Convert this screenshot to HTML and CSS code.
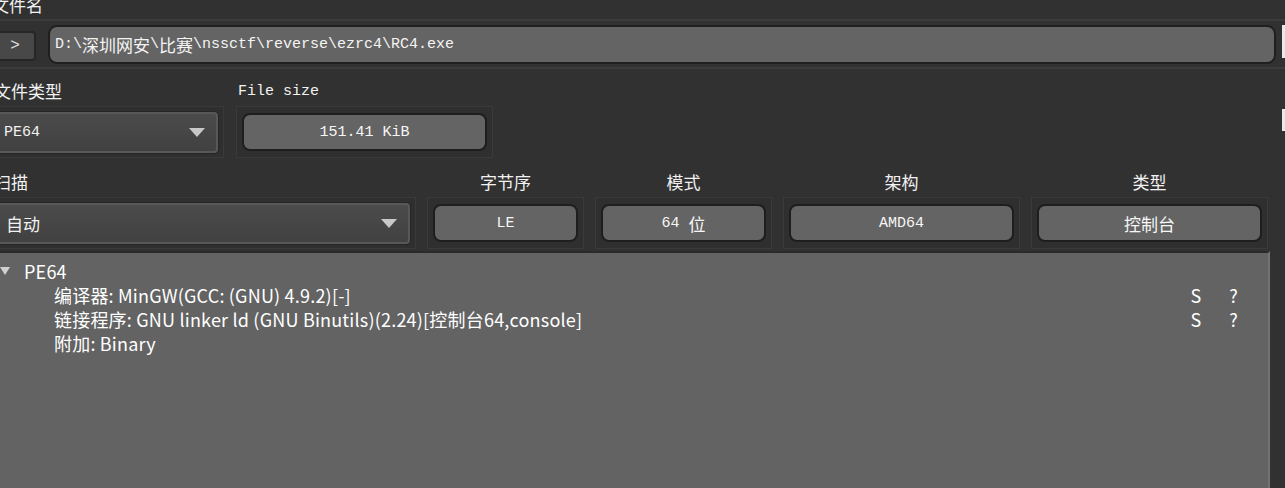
FILE: index.html
```html
<!DOCTYPE html>
<html lang="zh-CN">
<head>
  <meta charset="UTF-8">
  <title>Detect It Easy</title>
  <link rel="stylesheet" href="styles.css">
</head>
<body>
  <div class="window">
    <div class="caption">文件名</div>

    <div class="path-row">
      <button class="nav-btn">&gt;</button>
      <div class="path-field">D:\<span class="cjk">深圳网安</span>\<span class="cjk">比赛</span>\nssctf\reverse\ezrc4\RC4.exe</div>
      <div class="edge-bit"></div>
    </div>

    <div class="section info-grid">
      <div class="field">
        <div class="label">文件类型</div>
        <div class="frame">
          <div class="combo mono">PE64<span class="arrow"></span></div>
        </div>
      </div>
      <div class="field">
        <div class="label mono">File size</div>
        <div class="frame">
          <div class="value mono">151.41 KiB</div>
        </div>
      </div>
      <div class="edge-bit lower"></div>
    </div>

    <div class="section scan-grid">
      <div class="field">
        <div class="label">扫描</div>
        <div class="frame">
          <div class="combo combo-scan">自动<span class="arrow"></span></div>
        </div>
      </div>
      <div class="field">
        <div class="label centered">字节序</div>
        <div class="frame"><div class="value mono">LE</div></div>
      </div>
      <div class="field">
        <div class="label centered">模式</div>
        <div class="frame"><div class="value mono">64 <span class="cjk">位</span></div></div>
      </div>
      <div class="field">
        <div class="label centered">架构</div>
        <div class="frame"><div class="value mono">AMD64</div></div>
      </div>
      <div class="field">
        <div class="label centered">类型</div>
        <div class="frame"><div class="value mono"><span class="cjk">控制台</span></div></div>
      </div>
    </div>

    <div class="results">
      <div class="tree-row root">
        <span class="expander"></span>
        <span class="name">PE64</span>
      </div>
      <div class="tree-row child">
        <span class="name">编译器: MinGW(GCC: (GNU) 4.9.2)[-]</span>
        <span class="flag">S</span>
        <span class="flag">?</span>
      </div>
      <div class="tree-row child">
        <span class="name">链接程序: GNU linker ld (GNU Binutils)(2.24)[控制台64,console]</span>
        <span class="flag">S</span>
        <span class="flag">?</span>
      </div>
      <div class="tree-row child">
        <span class="name">附加: Binary</span>
      </div>
    </div>
  </div>
</body>
</html>
```

FILE: styles.css
```css
html, body {
  margin: 0;
  height: 100%;
}
body {
  background-color: #313131;
  color: #f2f2f2;
  font-family: "Noto Sans CJK SC", sans-serif;
  font-size: 17px;
  overflow: hidden;
}
.window {
  width: 1295px;
  margin-left: -10px;
  height: 100%;
  display: flex;
  flex-direction: column;
}
.mono {
  font-family: "Liberation Mono", "Noto Sans CJK SC", monospace;
  font-size: 15px;
}
.cjk {
  font-family: "Noto Sans CJK SC", sans-serif;
  font-size: 17px;
}
.caption {
  height: 19px;
  line-height: 10px;
  padding-left: 2px;
  flex-shrink: 0;
  white-space: nowrap;
}
.path-row {
  position: relative;
  height: 50px;
  flex-shrink: 0;
  border-top: 2px solid #3b3b3b;
  border-bottom: 2px solid #3b3b3b;
  display: flex;
  align-items: center;
  gap: 12px;
  padding-right: 9px;
  box-sizing: border-box;
}
.nav-btn {
  width: 46px;
  height: 30px;
  margin-top: 3px;
  background-color: #484848;
  border: 2px solid #262626;
  border-radius: 4px;
  color: #e0e0e0;
  font-family: "Liberation Mono", monospace;
  font-size: 16px;
  text-align: center;
  padding: 0 0 0 4px;
}
.path-field {
  flex: 1;
  height: 39px;
  box-sizing: border-box;
  background-color: #646464;
  border: 2px solid #1f1f1f;
  border-radius: 9px;
  display: flex;
  align-items: center;
  padding-left: 5px;
  font-family: "Liberation Mono", "Noto Sans CJK SC", monospace;
  font-size: 15px;
  color: #f4f4f4;
  white-space: pre;
}
.edge-bit {
  position: absolute;
  right: 0;
  top: 4px;
  width: 3px;
  height: 33px;
  background-color: #e8e8e8;
}
.edge-bit.lower {
  top: 40px;
  height: 22px;
}
.section {
  position: relative;
  display: grid;
  column-gap: 12px;
  flex-shrink: 0;
}
.info-grid {
  grid-template-columns: 234px 257px;
  padding-top: 10px;
}
.scan-grid {
  grid-template-columns: 426px 157px 177px 237px 237px;
  column-gap: 11px;
  padding-top: 12px;
}
.label {
  height: 24px;
  line-height: 24px;
  margin-bottom: 3px;
  padding-left: 4px;
  white-space: nowrap;
}
.label.mono {
  padding-left: 2px;
  line-height: 26px;
}
.label.centered {
  text-align: center;
  padding-left: 0;
}
.frame {
  height: 52px;
  box-sizing: border-box;
  border: 1px solid #3a3a3a;
  background-color: #2f2f2f;
  display: flex;
  align-items: center;
  padding: 0 5px;
}
.combo {
  position: relative;
  flex: 1;
  height: 41px;
  box-sizing: border-box;
  background: linear-gradient(#4b4b4b, #414141);
  border: 2px solid #585858;
  border-radius: 4px;
  box-shadow: 0 0 0 1px #262626;
  display: flex;
  align-items: center;
  padding-left: 6px;
  color: #f2f2f2;
}
.combo-scan {
  padding-left: 8px;
}
.arrow {
  position: absolute;
  right: 11px;
  top: 14px;
  width: 0;
  height: 0;
  border-left: 8px solid transparent;
  border-right: 8px solid transparent;
  border-top: 9px solid #c8c8c8;
}
.value {
  flex: 1;
  height: 38px;
  box-sizing: border-box;
  background-color: #646464;
  border: 2px solid #1e1e1e;
  border-radius: 8px;
  display: flex;
  align-items: center;
  justify-content: center;
  color: #f6f6f6;
  white-space: pre;
}
.results {
  flex: 1;
  margin-top: 2px;
  margin-right: 15px;
  border-top: 2px solid #2a2a2a;
  border-right: 2px solid #727272;
  background-color: #636363;
  padding-top: 6px;
  font-size: 18px;
  letter-spacing: 0.2px;
}
.tree-row {
  height: 24px;
  line-height: 24px;
  display: flex;
  align-items: center;
  white-space: nowrap;
  color: #ffffff;
}
.root .expander {
  width: 0;
  height: 0;
  margin-left: 10px;
  margin-right: 14px;
  border-left: 5px solid transparent;
  border-right: 5px solid transparent;
  border-top: 8px solid #d0d0d0;
}
.child {
  padding-left: 64px;
}
.child .name {
  width: 1145px;
}
.child .flag {
  width: 39px;
}
```
